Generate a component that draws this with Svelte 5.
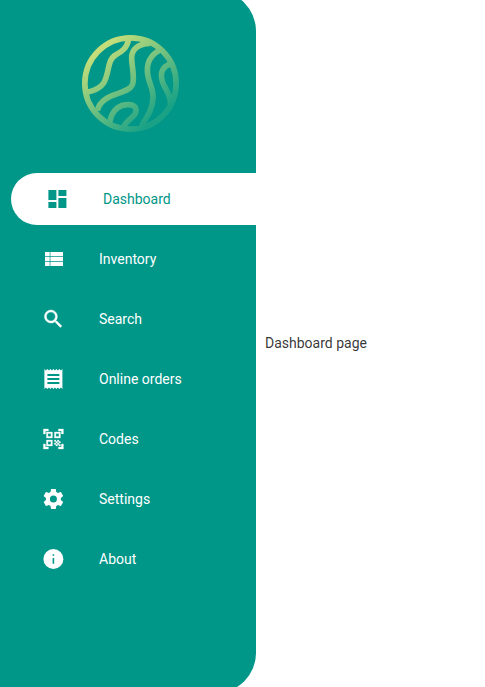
<script>
  const items = [
    { label: 'Dashboard', icon: 'M13 3v6h8V3m-8 18h8V11h-8M3 21h8v-6H3m0-2h8V3H3v10z' },
    { label: 'Inventory', icon: 'M3.600 5h4.700v4.300H3.600zM9 5h12.600v4.300H9zM3.600 10h4.700v4.200H3.600zM9 10h12.600v4.200H9zM3.600 15h4.700v4H3.600zM9 15h12.600v4H9z' },
    { label: 'Search', icon: 'M15.5 14h-.79l-.28-.27A6.47 6.47 0 0 0 16 9.5 6.5 6.5 0 1 0 9.5 16c1.61 0 3.09-.59 4.23-1.57l.27.28v.79l5 4.99L20.49 19l-4.99-5zm-6 0C7.01 14 5 11.99 5 9.5S7.01 5 9.5 5 14 7.01 14 9.5 11.99 14 9.5 14z', weight: 0.4 },
    { label: 'Online orders', icon: 'M18 17H6v-2h12v2zm0-4H6v-2h12v2zm0-4H6V7h12v2zM3 22l1.5-1.5L6 22l1.500-1.500L9 22l1.500-1.500L12 22l1.500-1.500L15 22l1.500-1.500L18 22l1.500-1.500L21 22V2l-1.500 1.500L18 2l-1.500 1.500L15 2l-1.500 1.500L12 2l-1.500 1.500L9 2 7.500 3.500 6 2 4.500 3.500 3 2v20z' },
    { label: 'Codes', icon: 'M9.500 6.500v3h-3v-3h3M11 5H5v6h6V5zm-1.500 9.500v3h-3v-3h3M11 13H5v6h6v-6zm6.500-6.500v3h-3v-3h3M19 5h-6v6h6V5zm-6 8h1.500v1.500H13V13zm1.500 1.500H16V16h-1.500v-1.500zM16 13h1.500v1.500H16V13zm-3 3h1.500v1.500H13V16zm1.500 1.500H16V19h-1.500v-1.500zM16 16h1.500v1.500H16V16zm1.500-1.500H19V16h-1.500v-1.500zm0 3H19V19h-1.500v-1.500zM22 7h-2V4h-3V2h5v5zm0 15v-5h-2v3h-3v2h5zM2 22h5v-2H4v-3H2v5zM2 2v5h2V4h3V2H2z', weight: 0.3 },
    { label: 'Settings', icon: 'M12 15.500A3.500 3.500 0 0 1 8.500 12 3.500 3.500 0 0 1 12 8.500a3.500 3.500 0 0 1 3.500 3.500 3.500 3.500 0 0 1-3.500 3.500m7.430-2.530c.04-.32.07-.64.07-.97 0-.33-.03-.66-.07-1l2.110-1.630c.19-.15.24-.42.12-.64l-2-3.460c-.12-.22-.39-.31-.61-.22l-2.490 1c-.52-.39-1.060-.73-1.690-.98l-.37-2.650A.506.506 0 0 0 14 2h-4c-.25 0-.46.18-.5.42l-.37 2.650c-.63.25-1.170.59-1.690.98l-2.490-1c-.22-.09-.49 0-.61.22l-2 3.460c-.13.22-.07.49.12.64L4.570 11c-.04.34-.07.67-.07 1 0 .33.03.65.07.97l-2.110 1.660c-.19.15-.25.42-.12.64l2 3.460c.12.22.39.3.61.22l2.490-1.010c.52.4 1.060.74 1.690.99l.37 2.650c.04.24.25.42.5.42h4c.25 0 .46-.18.5-.42l.37-2.650c.63-.26 1.170-.59 1.690-.99l2.490 1.010c.22.08.49 0 .61-.22l2-3.460c.12-.22.07-.49-.12-.64l-2.110-1.660z' },
    { label: 'About', icon: 'M12.800 8.800h-1.600V7.200h1.600m0 9.600h-1.600V11h1.600M12 2A10 10 0 0 0 2 12a10 10 0 0 0 10 10 10 10 0 0 0 10-10A10 10 0 0 0 12 2z' },
  ];

  let current = $state('Dashboard');

  function open(event, label) {
    event.preventDefault();
    current = label;
  }
</script>

<div class="page">
  <aside class="sidebar">
    <svg class="logo" viewBox="36 30 291 291" fill="none" stroke="url(#globe)" stroke-width="17" aria-hidden="true">
      <defs>
        <linearGradient id="globe" gradientUnits="userSpaceOnUse" x1="95" y1="70" x2="262" y2="275">
          <stop offset="0" stop-color="#c5de7a" />
          <stop offset="1" stop-color="#1aa286" />
        </linearGradient>
      </defs>
      <circle cx="181.500" cy="175.500" r="137" />
      <path d="M176 44C170 70 157 79 138 89C111 103 119 144 101 174C90 191 75 197 51 202" />
      <path d="M240 55C207 55 183 73 185 102C187 134 195 160 187 180C172 211 95 201 82 257" />
      <path d="M270 75C237 93 229 117 233 148C237 177 251 190 249 222C247 254 231 275 215 302" />
      <path d="M303 117C281 122 270 139 276 164C281 190 305 208 301 240" />
      <path d="M119 293C126 252 152 237 178 239C204 241 203 264 186 277C173 288 163 297 159 310" />
    </svg>

    <nav aria-label="Main">
      {#each items as item}
        <a
          href="#{item.label.toLowerCase().replace(' ', '-')}"
          class:active={current === item.label}
          aria-current={current === item.label ? 'page' : undefined}
          onclick={(event) => open(event, item.label)}
        >
          <svg class="icon" viewBox="-0.4 0 24 24" aria-hidden="true">
            <path d={item.icon} stroke="currentColor" stroke-width={item.weight ?? 0} />
          </svg>
          <span>{item.label}</span>
        </a>
      {/each}
    </nav>
  </aside>

  <main>{current} page</main>
</div>

<style>
  .page {
    display: flex;
    min-height: 100vh;
    overflow: hidden;
    background: #fff;
    color: rgba(0, 0, 0, 0.8);
    font: 14px/20px Roboto, sans-serif;
  }

  .sidebar {
    box-sizing: border-box;
    flex: 0 0 256px;
    margin: -9px 0 -6px;
    padding: 44px 0 16px;
    border-radius: 0 40px 40px 0;
    background: #009688;
  }

  .logo {
    display: block;
    width: 97px;
    height: 97px;
    margin: 0 auto 41px 82px;
  }

  nav {
    display: flex;
    flex-direction: column;
    gap: 8px;
    padding-left: 11px;
  }

  a {
    display: flex;
    align-items: center;
    gap: 34px;
    height: 52px;
    padding-left: 30px;
    border-radius: 26px 0 0 26px;
    color: #fff;
    text-decoration: none;
  }

  a.active {
    padding-left: 34px;
    background: #fff;
    color: #009688;
  }

  .icon {
    width: 24px;
    height: 24px;
    fill: currentColor;
  }

  main {
    display: flex;
    flex: 1;
    align-items: center;
    padding: 0 9px 2px;
  }
</style>
